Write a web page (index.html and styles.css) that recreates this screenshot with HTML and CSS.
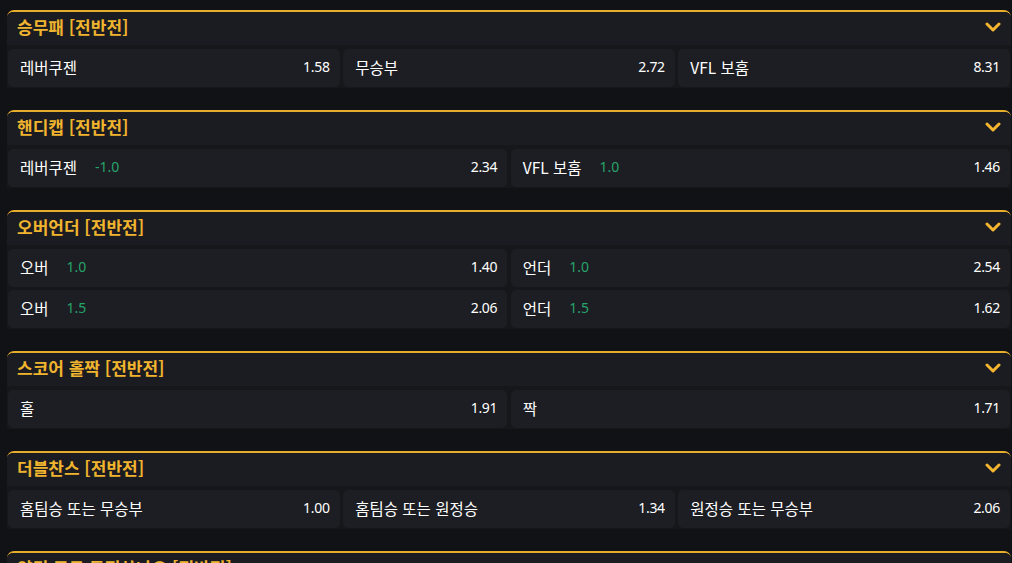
FILE: index.html
```html
<!DOCTYPE html>
<html lang="ko">
<head>
<meta charset="utf-8">
<link rel="stylesheet" href="styles.css">
</head>
<body>
<div class="page">
  <section class="market">
    <div class="market-head"><span class="title">승무패 [전반전]</span><svg class="chev" viewBox="0 0 16 10" width="16" height="10"><path d="M2 2 L8 8 L14 2" fill="none" stroke="#f5b52e" stroke-width="3" stroke-linecap="round" stroke-linejoin="round"/></svg></div>
    <div class="grid cols3">
      <div class="odd"><span class="lbl">레버쿠젠</span><span class="val">1.58</span></div>
      <div class="odd"><span class="lbl">무승부</span><span class="val">2.72</span></div>
      <div class="odd"><span class="lbl">VFL 보훔</span><span class="val">8.31</span></div>
    </div>
  </section>
  <section class="market">
    <div class="market-head"><span class="title">핸디캡 [전반전]</span><svg class="chev" viewBox="0 0 16 10" width="16" height="10"><path d="M2 2 L8 8 L14 2" fill="none" stroke="#f5b52e" stroke-width="3" stroke-linecap="round" stroke-linejoin="round"/></svg></div>
    <div class="grid cols2">
      <div class="odd"><span class="lbl">레버쿠젠<span class="line">-1.0</span></span><span class="val">2.34</span></div>
      <div class="odd"><span class="lbl">VFL 보훔<span class="line">1.0</span></span><span class="val">1.46</span></div>
    </div>
  </section>
  <section class="market">
    <div class="market-head"><span class="title">오버언더 [전반전]</span><svg class="chev" viewBox="0 0 16 10" width="16" height="10"><path d="M2 2 L8 8 L14 2" fill="none" stroke="#f5b52e" stroke-width="3" stroke-linecap="round" stroke-linejoin="round"/></svg></div>
    <div class="grid cols2">
      <div class="odd"><span class="lbl">오버<span class="line">1.0</span></span><span class="val">1.40</span></div>
      <div class="odd"><span class="lbl">언더<span class="line">1.0</span></span><span class="val">2.54</span></div>
      <div class="odd"><span class="lbl">오버<span class="line">1.5</span></span><span class="val">2.06</span></div>
      <div class="odd"><span class="lbl">언더<span class="line">1.5</span></span><span class="val">1.62</span></div>
    </div>
  </section>
  <section class="market">
    <div class="market-head"><span class="title">스코어 홀짝 [전반전]</span><svg class="chev" viewBox="0 0 16 10" width="16" height="10"><path d="M2 2 L8 8 L14 2" fill="none" stroke="#f5b52e" stroke-width="3" stroke-linecap="round" stroke-linejoin="round"/></svg></div>
    <div class="grid cols2">
      <div class="odd"><span class="lbl">홀</span><span class="val">1.91</span></div>
      <div class="odd"><span class="lbl">짝</span><span class="val">1.71</span></div>
    </div>
  </section>
  <section class="market">
    <div class="market-head"><span class="title">더블찬스 [전반전]</span><svg class="chev" viewBox="0 0 16 10" width="16" height="10"><path d="M2 2 L8 8 L14 2" fill="none" stroke="#f5b52e" stroke-width="3" stroke-linecap="round" stroke-linejoin="round"/></svg></div>
    <div class="grid cols3">
      <div class="odd"><span class="lbl">홈팀승 또는 무승부</span><span class="val">1.00</span></div>
      <div class="odd"><span class="lbl">홈팀승 또는 원정승</span><span class="val">1.34</span></div>
      <div class="odd"><span class="lbl">원정승 또는 무승부</span><span class="val">2.06</span></div>
    </div>
  </section>
  <section class="market">
    <div class="market-head"><span class="title">양팀 모두 득점하나요 [전반전]</span><svg class="chev" viewBox="0 0 16 10" width="16" height="10"><path d="M2 2 L8 8 L14 2" fill="none" stroke="#f5b52e" stroke-width="3" stroke-linecap="round" stroke-linejoin="round"/></svg></div>
  </section>
</div>
</body>
</html>
```
FILE: styles.css
```css
html, body {
  margin: 0;
  padding: 0;
  background: #111216;
  overflow: hidden;
}
body {
  font-family: "Noto Sans", "Noto Sans CJK KR", sans-serif;
  color: #ffffff;
}
.page {
  padding: 10px 1px 0 7px;
  height: 563px;
  box-sizing: border-box;
}
.market {
  background: #16171b;
  border-top: 2px solid #e6ac2c;
  border-radius: 7px 7px 0 0;
  padding: 0 1px 1px 1px;
  margin-bottom: 22px;
}
.market-head {
  height: 33px;
  background: #1b1c21;
  display: flex;
  align-items: center;
  justify-content: space-between;
  padding: 0 10px 3px 10px;
  box-sizing: border-box;
  margin: 0 -1px;
  border-radius: 6px 6px 0 0;
}
.title {
  color: #f0b42e;
  font-family: "Noto Sans CJK KR", sans-serif;
  font-weight: 700;
  font-size: 17px;
  line-height: 20px;
}
.chev {
  display: block;
  margin-top: -1px;
}
.grid {
  display: grid;
  gap: 3px 3.5px;
  margin-top: 4px;
}
.cols3 { grid-template-columns: repeat(3, 1fr); }
.cols2 { grid-template-columns: repeat(2, 1fr); }
.odd {
  height: 38px;
  box-sizing: border-box;
  background: #1d1e23;
  border-radius: 5px;
  display: flex;
  align-items: center;
  justify-content: space-between;
  padding: 0 10px 3px 12px;
  font-size: 14px;
}
.lbl {
  font-family: "Noto Sans CJK KR", sans-serif;
  font-size: 15.5px;
  color: #ffffff;
  display: flex;
  align-items: center;
}
.line {
  color: #26a36a;
  margin-left: 18px;
  font-family: "Noto Sans", sans-serif;
  font-size: 14px;
}
.val {
  color: #ffffff;
  font-family: "Noto Sans", sans-serif;
  font-size: 14px;
  letter-spacing: -0.3px;
}
```
